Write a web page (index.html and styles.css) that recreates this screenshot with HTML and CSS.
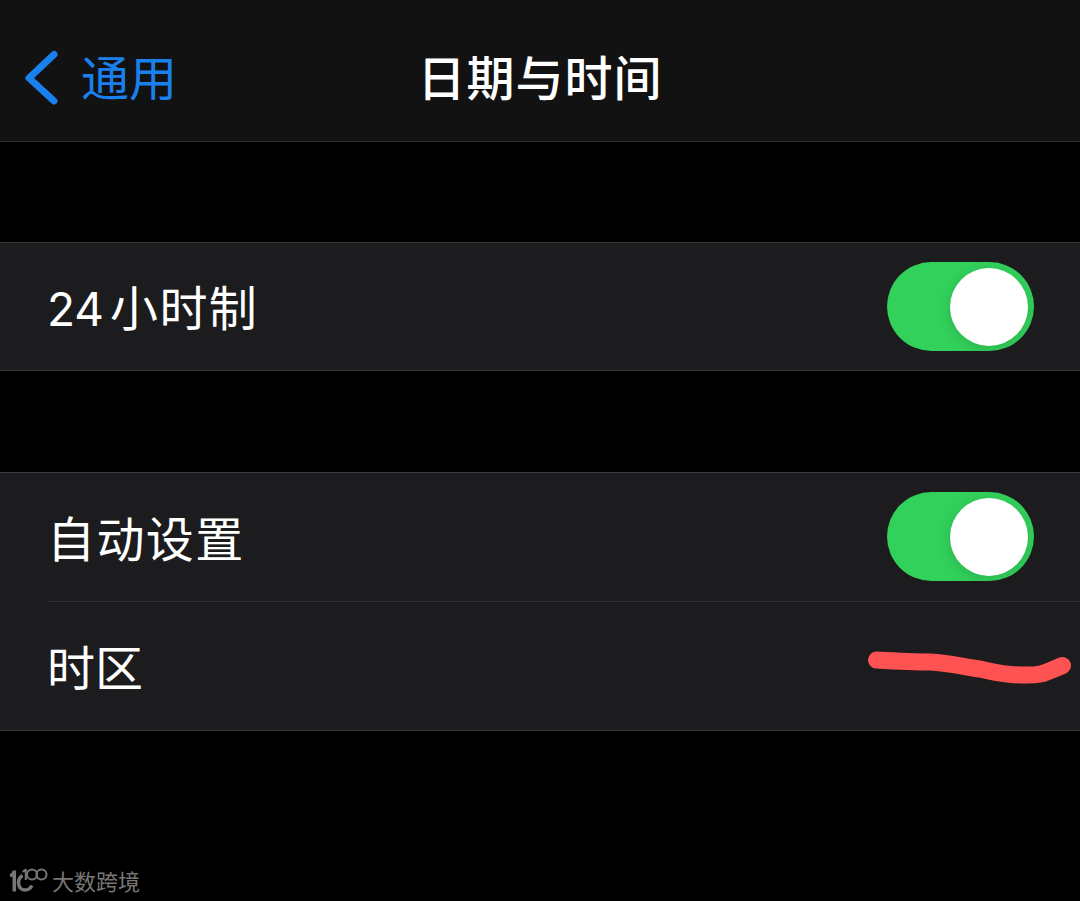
FILE: index.html
```html
<!DOCTYPE html>
<html lang="zh-CN">
<head>
    <meta charset="UTF-8">
    <title>日期与时间</title>
    <link rel="stylesheet" href="styles.css">
</head>

<body>

<header class="navbar">
    <a class="back">
        <svg class="back-icon" width="34" height="56" viewBox="0 0 34 56">
            <path d="M30 4.5 L5 28 L30 51"/>
        </svg>
        <span class="back-text">通用</span>
    </a>
    <h1 class="title">日期与时间</h1>
</header>

<main class="settings">
    <div class="group group-clock">
        <div class="row">
            <span class="label"><span class="num">24</span>小时制</span>
            <span class="switch"><span class="knob"></span></span>
        </div>
    </div>

    <div class="group group-zone">
        <div class="row">
            <span class="label label-auto">自动设置</span>
            <span class="switch"><span class="knob"></span></span>
        </div>
        <div class="row row-zone">
            <span class="label">时区</span>
            <svg class="scribble" width="212" height="60" viewBox="0 0 212 60">
                <path d="M8.500 24 C26 25 44 26 62 26 C80 27 98 31 112 33 C126 36 134 39 154 39 C176 39.500 176 37 194.500 29.500"/>
            </svg>
        </div>
    </div>
</main>

<footer class="watermark">
    <svg class="logo" width="39" height="28" viewBox="0 0 39 28">
        <path d="M1 8.500 Q5 8 5.300 3.500 V24.500"/>
        <path d="M13.500 8.500 Q9.500 11 9.500 16 Q10 23 16 23 Q20.500 23 23 18.500"/>
        <path class="thin" d="M13.500 4.500 Q16.500 4 16.800 2 V13"/>
        <circle class="thin" cx="23" cy="7.500" r="5"/>
        <circle class="thin" cx="32.500" cy="7.500" r="5"/>
    </svg>
    <span class="watermark-text">大数跨境</span>
</footer>

</body>
</html>
```
FILE: styles.css
```css
* {
    box-sizing: border-box;
}

body {
    margin: 0;
    height: 901px;
    display: flex;
    flex-direction: column;
    overflow: hidden;
    background: #000;
    color: #fff;
    font-family: "Noto Sans CJK SC", sans-serif;
    font-size: 48px;
    line-height: 72px;
}

/* 顶部导航：左右两列等宽，标题居中 */
.navbar {
    display: grid;
    grid-template-columns: 1fr auto 1fr;
    height: 142px;
    padding: 14px 0 0 24px;
    align-items: center;
    background: #121212;
    border-bottom: 1px solid #2c2c2d;
}

.back {
    display: flex;
    align-items: center;
    gap: 23px;
    color: #1a80ee;
}

.back-text {
    padding-bottom: 6px;
}

.back-icon path {
    fill: none;
    stroke: #1a80ee;
    stroke-width: 7;
    stroke-linecap: round;
    stroke-linejoin: round;
}

.title {
    margin: 0 24px 0 0;
    padding-bottom: 6px;
    font-size: 48px;
    font-weight: 500;
    letter-spacing: 1px;
}

.group {
    background: #1c1c1e;
    border-top: 1px solid #38383a;
    border-bottom: 1px solid #38383a;
}

.group-clock {
    margin-top: 100px;
}

.group-zone {
    margin-top: 101px;
}

.row {
    display: flex;
    height: 127px;
    padding: 0 46px 0 47px;
    align-items: center;
    justify-content: space-between;
}

.label {
    letter-spacing: 1.4px;
}

.label-auto {
    padding-bottom: 2px;
}

.num {
    margin-right: 6px;
    font-family: Inter, sans-serif;
    font-size: 46px;
    letter-spacing: 0;
}

.switch {
    width: 147px;
    height: 89px;
    padding: 6px 6px 5px;
    border-radius: 45px;
    background: #32d15b;
    overflow: hidden;
}

.knob {
    display: block;
    width: 78px;
    height: 78px;
    margin-left: auto;
    border-radius: 50%;
    background: #fff;
    box-shadow: 0 3px 14px rgba(0, 0, 0, .15);
}

/* 分隔线从文字左侧开始 */
.row-zone {
    height: 129px;
    margin: 1px 0 0 47px;
    padding: 0;
    border-top: 1px solid #303032;
}

.row-zone .label {
    padding-bottom: 3px;
    letter-spacing: 0;
}

.scribble path {
    fill: none;
    stroke: #ff5252;
    stroke-width: 17;
    stroke-linecap: round;
    stroke-linejoin: round;
}

.watermark {
    display: flex;
    margin-top: auto;
    padding: 0 0 3px 9px;
    align-items: center;
    gap: 4px;
    color: #777;
    font-size: 22px;
    line-height: 32px;
}

.watermark-text {
    padding-bottom: 2px;
}

.logo path,
.logo circle {
    fill: none;
    stroke: #777;
    stroke-width: 3.5;
}

.logo .thin {
    stroke-width: 2;
}
```
